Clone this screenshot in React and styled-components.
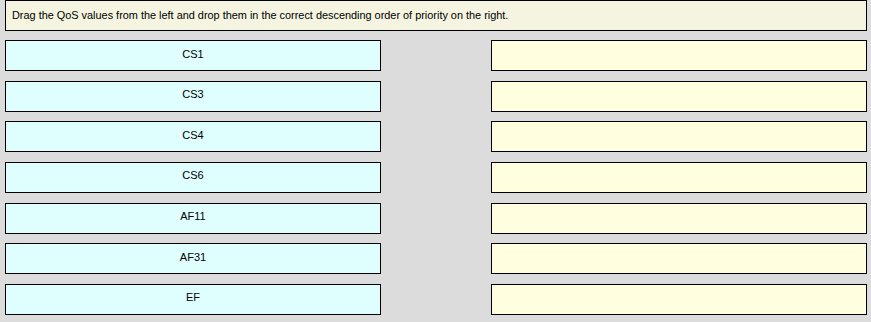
import React from "react";
import styled, { createGlobalStyle } from "styled-components";

const Global = createGlobalStyle`
  html, body { margin: 0; padding: 0; background: #dcdcdc; }
  body { font-family: "Liberation Sans", Arial, sans-serif; }
`;

const Page = styled.div`
  width: 871px;
  height: 322px;
  box-sizing: border-box;
  padding: 0 4px 0 5px;
  background: #dcdcdc;
  display: flex;
  flex-direction: column;
  gap: 9px;
`;

const Instruction = styled.div`
  height: 31px;
  box-sizing: border-box;
  border: 1px solid #000;
  background: #f4f4e1;
  display: flex;
  align-items: center;
  padding: 0 0 2px 6px;
  font-size: 10.9px;
  color: #000;
`;

const Grid = styled.div`
  display: grid;
  grid-template-columns: 376px 376px;
  justify-content: space-between;
  row-gap: 9.67px;
`;

const Slot = styled.div`
  height: 31px;
  box-sizing: border-box;
  border: 1px solid #000;
  background: ${(p) => (p.$target ? "#ffffe0" : "#dfffff")};
  display: flex;
  align-items: center;
  justify-content: center;
  padding-bottom: 4px;
  font-size: 11px;
  color: #000;
`;

const items = ["CS1", "CS3", "CS4", "CS6", "AF11", "AF31", "EF"];

export default function App() {
  return (
    <>
      <Global />
      <Page>
        <Instruction>
          Drag the QoS values from the left and drop them in the correct descending order of priority on the right.
        </Instruction>
        <Grid>
          {items.map((it) => (
            <React.Fragment key={it}>
              <Slot>{it}</Slot>
              <Slot $target />
            </React.Fragment>
          ))}
        </Grid>
      </Page>
    </>
  );
}
